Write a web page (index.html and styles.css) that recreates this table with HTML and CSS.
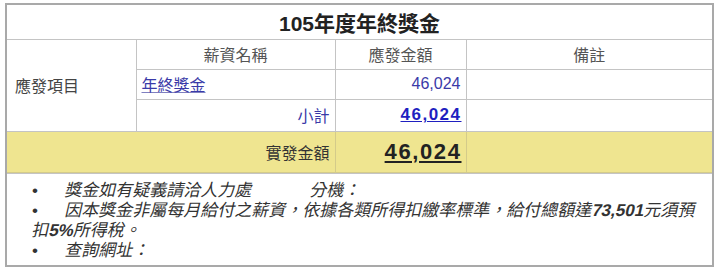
FILE: index.html
```html
<!DOCTYPE html>
<html lang="zh-Hant">
<head>
<meta charset="utf-8">
<title>105年度年終獎金</title>
<link rel="stylesheet" href="styles.css">
</head>
<body>
<div class="box">
  <table class="pay">
    <colgroup>
      <col class="c1"><col class="c2"><col class="c3"><col class="c4">
    </colgroup>
    <tr class="r-title">
      <th colspan="4" class="title">105年度年終獎金</th>
    </tr>
    <tr class="r-head">
      <td rowspan="3" class="label">應發項目</td>
      <td class="center head">薪資名稱</td>
      <td class="center head">應發金額</td>
      <td class="center head">備註</td>
    </tr>
    <tr class="r-item">
      <td class="item"><a href="#" class="link">年終獎金</a></td>
      <td class="num blue">46,024</td>
      <td></td>
    </tr>
    <tr class="r-sub">
      <td class="num blue">小計</td>
      <td class="num tight"><a href="#" class="sub-total">46,024</a></td>
      <td></td>
    </tr>
    <tr class="r-total">
      <td colspan="2" class="num dark">實發金額</td>
      <td class="num tight"><span class="grand">46,024</span></td>
      <td></td>
    </tr>
  </table>
  <div class="notes">
    <div class="note"><span class="dot">•</span><span class="slant">獎金如有疑義請洽人力處</span><span class="slant ext">分機：</span></div>
    <div class="note"><span class="dot">•</span><span class="slant">因本獎金非屬每月給付之薪資，依據各類所得扣繳率標準，給付總額達<b>73,501</b>元須預</span></div>
    <div class="note"><span class="slant">扣<b>5%</b>所得稅。</span></div>
    <div class="note"><span class="dot">•</span><span class="slant">查詢網址：</span></div>
  </div>
</div>
</body>
</html>
```
FILE: styles.css
```css
html, body {
  margin: 0;
  padding: 0;
  background: #ffffff;
}
body {
  font-family: "Liberation Sans", "Noto Sans CJK TC", sans-serif;
  color: #444444;
}
.box {
  margin: 3px 0 0 5px;
  width: 705px;
  border: 2px solid #a9a9a9;
  background: #ffffff;
}
.pay {
  width: 705px;
  border-collapse: collapse;
  table-layout: fixed;
}
.c1 { width: 129px; }
.c2 { width: 199px; }
.c3 { width: 131px; }
.c4 { width: 246px; }
.pay th, .pay td {
  border: 1px solid #c4c4c4;
  padding: 0 5px;
  font-size: 16px;
  font-weight: normal;
  white-space: nowrap;
}
.pay tr:first-child th { border-top: 0; }
.pay td:first-child, .pay th:first-child { border-left: 0; }
.pay td:last-child, .pay th:last-child { border-right: 0; }
.r-title { height: 34px; }
.r-head { height: 30px; }
.r-item { height: 30px; }
.r-sub { height: 32px; }
.r-total { height: 41px; }
.pay .title {
  font-size: 21px;
  font-weight: bold;
  color: #222222;
  text-align: center;
}
.pay .center { text-align: center; }
.pay .head { color: #555555; }
.pay .label { color: #444444; padding-left: 8px; }
.pay .item { padding-left: 5px; }
.link {
  color: #3a3aa8;
  text-decoration: underline;
  text-decoration-color: #8080c0;
}
.pay .num { text-align: right; }
.pay .tight { padding-right: 4px; }
.pay .blue { color: #3a3aa8; }
.pay .dark { color: #333333; }
.sub-total {
  color: #1f1fc0;
  font-weight: bold;
  font-size: 17px;
  letter-spacing: 1.5px;
  text-decoration: underline;
}
.pay .r-total td {
  background: #efe590;
  border-color: #d4cb8a;
}
.grand {
  color: #222222;
  font-weight: bold;
  font-size: 22px;
  letter-spacing: 1.6px;
  text-decoration: underline;
}
.notes {
  border-top: 1px solid #c4c4c4;
  padding: 7px 10px 4px 23px;
  font-size: 17px;
  line-height: 20px;
  color: #333333;
}
.note { white-space: nowrap; }
.slant {
  display: inline-block;
  transform: skewX(-13deg);
  transform-origin: 0 100%;
}
.notes b { font-weight: bold; }
.dot {
  display: inline-block;
  width: 33px;
  padding-left: 2px;
  box-sizing: border-box;
}
.ext { margin-left: 58px; }
```
